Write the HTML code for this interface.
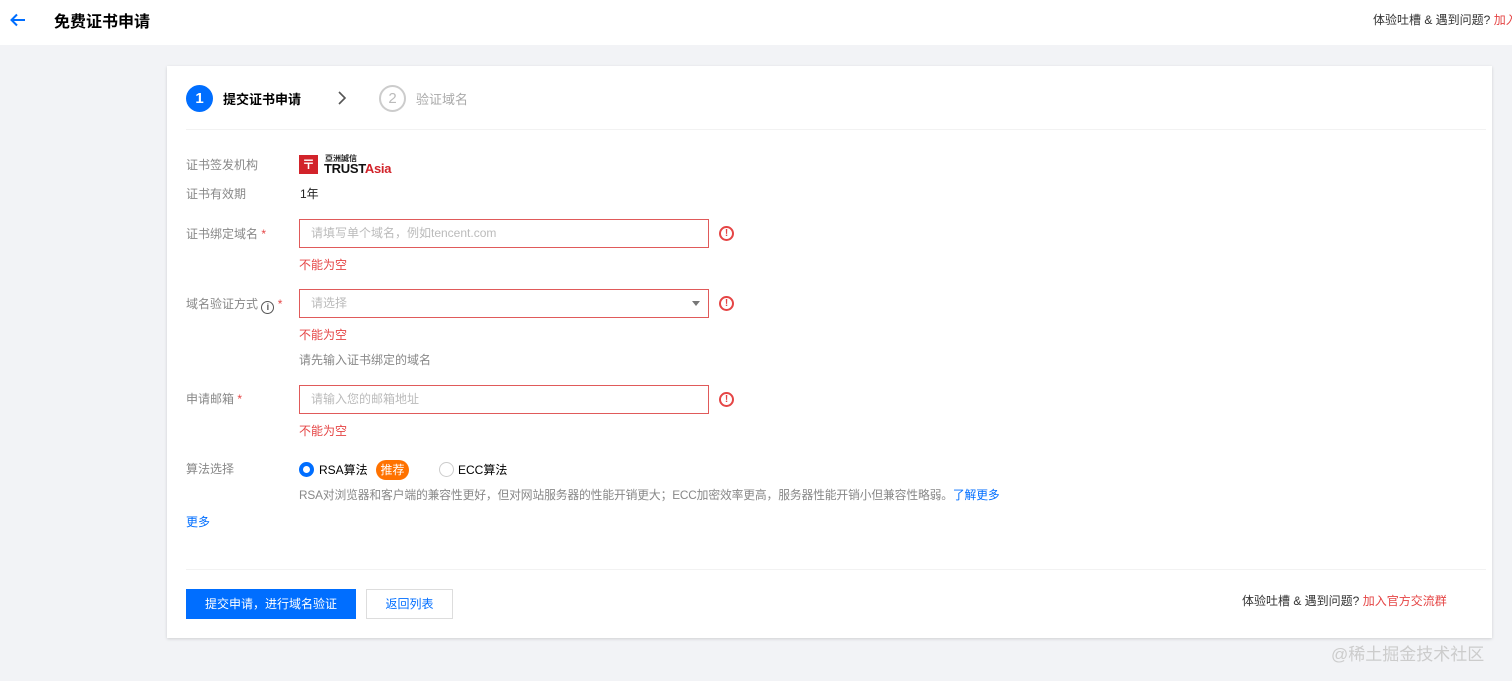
<!DOCTYPE html>
<html><head><meta charset="utf-8"><style>
*{box-sizing:border-box;margin:0;padding:0}
body{width:1512px;height:681px;background:#f2f3f6;font-family:"Liberation Sans","Noto Sans CJK SC",sans-serif;font-size:12px;color:#000;position:relative;overflow:hidden}
.abs{position:absolute;white-space:nowrap}
.hdr{left:0;top:0;width:1512px;height:45px;background:#fff}
.card{left:167px;top:66px;width:1325px;height:572px;background:#fff;box-shadow:0 1px 3px rgba(0,0,0,.15)}
.lbl{color:#888;font-size:12px}
.inp{border:1px solid #e05a5a;height:29px;width:410px;left:299px;background:#fff;color:#bbb;padding-left:11px;line-height:27px}
.err{color:#e54545;font-size:12px}
.ei{width:15px;height:15px;border:2px solid #e54545;border-radius:50%;color:#e54545;font-size:10px;font-weight:bold;text-align:center;line-height:11px;left:719px}
.star{color:#e54545}
</style></head><body>
<div class="abs hdr"></div>
<svg class="abs" style="left:9px;top:12px" width="18" height="16" viewBox="0 0 18 16"><path d="M16 8H3M8 2.5L2.5 8 8 13.5" stroke="#006eff" stroke-width="2" fill="none"/></svg>
<div class="abs" style="left:54px;top:8px;font-size:16px;font-weight:bold;color:#000">免费证书申请</div>
<div class="abs" style="left:1373px;top:11px;font-size:12px;color:#333">体验吐槽 &amp; 遇到问题? <span style="color:#e54545">加入</span></div>

<div class="abs card"></div>
<div class="abs" style="left:186px;top:85px;width:27px;height:27px;border-radius:50%;background:#006eff;color:#fff;font-size:15px;font-weight:bold;text-align:center;line-height:27px">1</div>
<div class="abs" style="left:223px;top:89px;font-size:13px;font-weight:bold">提交证书申请</div>
<svg class="abs" style="left:337px;top:91px" width="10" height="14"><path d="M2 1l6 6-6 6" stroke="#555" stroke-width="1.6" fill="none"/></svg>
<div class="abs" style="left:379px;top:85px;width:27px;height:27px;border-radius:50%;border:2px solid #ccc;color:#bbb;font-size:15px;text-align:center;line-height:23px">2</div>
<div class="abs" style="left:416px;top:89px;font-size:13px;color:#aaa">验证域名</div>
<div class="abs" style="left:186px;top:129px;width:1300px;height:1px;background:#f2f2f2"></div>

<div class="abs lbl" style="left:186px;top:156px">证书签发机构</div>
<div class="abs" style="left:299px;top:155px;width:19px;height:19px;background:#d2232a;color:#fff;font-size:13px;font-weight:bold;text-align:center;line-height:19px">〒</div>
<div class="abs" style="left:325px;top:153px;font-size:8px;font-weight:bold;color:#222">亞洲誠信</div>
<div class="abs" style="left:324px;top:161px;font-size:13px;font-weight:bold;letter-spacing:-0.3px"><span style="color:#111">TRUST</span><span style="color:#d2232a">Asia</span></div>
<div class="abs lbl" style="left:186px;top:185px">证书有效期</div>
<div class="abs" style="left:300px;top:185px;color:#222">1年</div>

<div class="abs lbl" style="left:186px;top:225px">证书绑定域名 <span class="star">*</span></div>
<div class="abs inp" style="top:219px">请填写单个域名，例如tencent.com</div>
<div class="abs ei" style="top:226px">!</div>
<div class="abs err" style="left:299px;top:256px">不能为空</div>

<div class="abs lbl" style="left:186px;top:295px">域名验证方式 <span style="display:inline-block;width:13px;height:13px;border:1.5px solid #555;border-radius:50%;color:#555;font-size:9px;font-weight:bold;text-align:center;line-height:10px;vertical-align:-2px">i</span> <span class="star">*</span></div>
<div class="abs inp" style="top:289px">请选择</div>
<div class="abs" style="left:692px;top:301px;width:0;height:0;border-left:4px solid transparent;border-right:4px solid transparent;border-top:5px solid #777"></div>
<div class="abs ei" style="top:296px">!</div>
<div class="abs err" style="left:299px;top:326px">不能为空</div>
<div class="abs" style="left:299px;top:351px;color:#888">请先输入证书绑定的域名</div>

<div class="abs lbl" style="left:186px;top:390px">申请邮箱 <span class="star">*</span></div>
<div class="abs inp" style="top:385px">请输入您的邮箱地址</div>
<div class="abs ei" style="top:392px">!</div>
<div class="abs err" style="left:299px;top:422px">不能为空</div>

<div class="abs lbl" style="left:186px;top:460px">算法选择</div>
<div class="abs" style="left:299px;top:462px;width:15px;height:15px;border:4px solid #006eff;border-radius:50%"></div>
<div class="abs" style="left:319px;top:461px">RSA算法</div>
<div class="abs" style="left:376px;top:460px;width:33px;height:20px;background:#ff7200;border-radius:10px;color:#fff;text-align:center;line-height:20px">推荐</div>
<div class="abs" style="left:439px;top:462px;width:15px;height:15px;border:1px solid #ccc;border-radius:50%"></div>
<div class="abs" style="left:458px;top:461px">ECC算法</div>
<div class="abs" style="left:299px;top:486px;color:#888;font-size:11.8px;letter-spacing:-0.15px">RSA对浏览器和客户端的兼容性更好，但对网站服务器的性能开销更大；ECC加密效率更高，服务器性能开销小但兼容性略弱。<span style="color:#006eff">了解更多</span></div>
<div class="abs" style="left:186px;top:513px;color:#006eff">更多</div>

<div class="abs" style="left:186px;top:569px;width:1300px;height:1px;background:#f2f2f2"></div>
<div class="abs" style="left:186px;top:589px;width:170px;height:30px;background:#006eff;color:#fff;text-align:center;line-height:30px">提交申请，进行域名验证</div>
<div class="abs" style="left:366px;top:589px;width:87px;height:30px;border:1px solid #ddd;color:#006eff;text-align:center;line-height:28px">返回列表</div>
<div class="abs" style="left:1242px;top:592px;color:#333">体验吐槽 &amp; 遇到问题? <span style="color:#e54545">加入官方交流群</span></div>
<div class="abs" style="left:1331px;top:640px;font-size:17px;color:#ccc">@稀土掘金技术社区</div>
</body></html>
